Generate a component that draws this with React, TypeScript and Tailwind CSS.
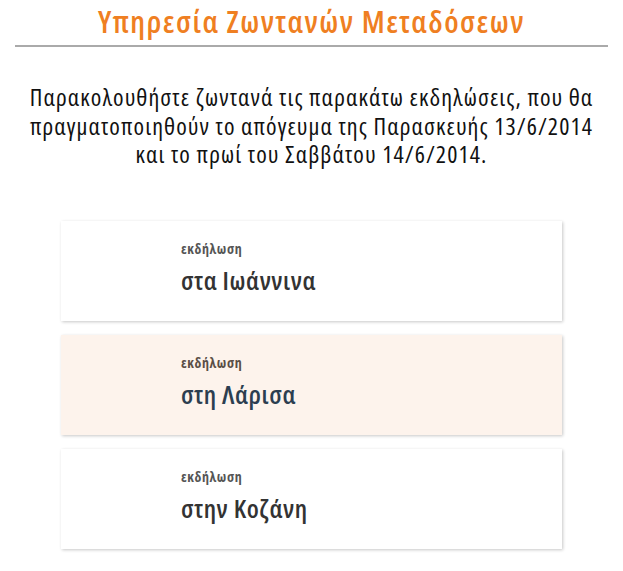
const events = [
  { place: "στα Ιωάννινα", highlight: false },
  { place: "στη Λάρισα", highlight: true },
  { place: "στην Κοζάνη", highlight: false },
];

export default function App() {
  return (
    <div className="min-h-screen bg-white font-['Open_Sans','DejaVu_Sans_Condensed',sans-serif] font-stretch-condensed">
      <div className="px-[15px] pt-[2px]">
        <h1 className="text-center text-[31px] leading-[39px] font-semibold tracking-[1.5px] text-[#ef7f22]">
          Υπηρεσία Ζωντανών Μεταδόσεων
        </h1>
        <div className="mt-[4px] h-[2px] bg-[#aaaaaa]" />
      </div>

      <p className="mt-[36px] px-2 text-center text-[24px] leading-[28.5px] tracking-[1.1px] text-[#111]">
        Παρακολουθήστε ζωντανά τις παρακάτω εκδηλώσεις, που θα
        <br />
        πραγματοποιηθούν το απόγευμα της Παρασκευής 13/6/2014
        <br />
        και το πρωί του Σαββάτου 14/6/2014.
      </p>

      <div className="mt-[52px] flex flex-col items-center gap-[14px]">
        {events.map((ev) => (
          <div
            key={ev.place}
            className={`h-[100px] w-[501px] pl-[120px] pt-[20px] shadow-[1px_1px_3px_rgba(0,0,0,0.22)] ${
              ev.highlight ? "bg-[#fdf3ec]" : "bg-white"
            }`}
          >
            <div
              className={`text-[14px] leading-[16px] font-bold tracking-[0.6px] ${
                ev.highlight ? "text-[#5a4e46]" : "text-[#555]"
              }`}
            >
              εκδήλωση
            </div>
            <div
              className={`mt-[7px] text-[26px] leading-[32px] font-semibold tracking-[0.6px] ${
                ev.highlight ? "text-[#2c3e50]" : "text-[#333]"
              }`}
            >
              {ev.place}
            </div>
          </div>
        ))}
      </div>
    </div>
  );
}
